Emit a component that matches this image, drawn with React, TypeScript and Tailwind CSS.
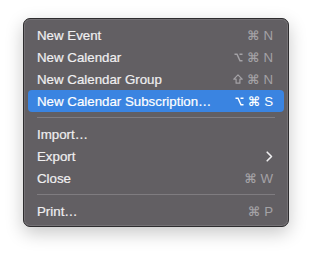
import React from "react";

type Item =
  | { kind: "item"; label: string; keys?: string[]; active?: boolean; submenu?: boolean }
  | { kind: "sep" };

const items: Item[] = [
  { kind: "item", label: "New Event", keys: ["cmd", "N"] },
  { kind: "item", label: "New Calendar", keys: ["opt", "cmd", "N"] },
  { kind: "item", label: "New Calendar Group", keys: ["shift", "cmd", "N"] },
  { kind: "item", label: "New Calendar Subscription…", keys: ["opt", "cmd", "S"], active: true },
  { kind: "sep" },
  { kind: "item", label: "Import…" },
  { kind: "item", label: "Export", submenu: true },
  { kind: "item", label: "Close", keys: ["cmd", "W"] },
  { kind: "sep" },
  { kind: "item", label: "Print…", keys: ["cmd", "P"] },
];

function KeyGlyph({ k, color }: { k: string; color: string }) {
  if (k === "opt") {
    return (
      <svg width="9" height="9" viewBox="0 0 9 9" className="block">
        <path d="M0.5 1.2 H3 L6 7.8 H8.5 M5.5 1.2 H8.5" fill="none" stroke={color} strokeWidth="1.4" />
      </svg>
    );
  }
  if (k === "shift") {
    return (
      <svg width="10" height="10" viewBox="0 0 10 10" className="block">
        <path d="M5 0.9 L9.2 5.2 H6.9 V9.2 H3.1 V5.2 H0.8 Z" fill="none" stroke={color} strokeWidth="1.2" strokeLinejoin="round" />
      </svg>
    );
  }
  if (k === "cmd") {
    return (
      <span className="font-['DejaVu_Sans',sans-serif] font-bold text-[13px] leading-none">⌘</span>
    );
  }
  return <span className="font-['Liberation_Sans',sans-serif] text-[13.3px] leading-none">{k}</span>;
}

function Keys({ keys, active }: { keys: string[]; active?: boolean }) {
  const color = active ? "#ffffff" : "#a4a2a6";
  return (
    <div className="flex items-center gap-[4px] pt-[1px]" style={{ color }}>
      {keys.map((k, i) => (
        <KeyGlyph key={i} k={k} color={color} />
      ))}
    </div>
  );
}

export default function App() {
  return (
    <div className="w-[312px] h-[254px] bg-white pt-[18px] pl-[23px]">
      <div className="w-[266px] rounded-[7px] bg-[#625f63] border border-[#2e2d2f] shadow-[0_6px_18px_rgba(0,0,0,0.22),inset_0_0_0_1px_rgba(255,255,255,0.12)] px-[4px] pt-[5px] pb-[4px] font-['Liberation_Sans',sans-serif]">
        {items.map((it, i) =>
          it.kind === "sep" ? (
            <div key={i} className="h-[11px] flex items-center px-[9px]">
              <div className="h-px w-full bg-[#7f7c80]" />
            </div>
          ) : (
            <div
              key={i}
              className={`h-[22px] flex items-center justify-between pl-[9px] pr-[11px] rounded-[4px] ${
                it.active ? "bg-[#3a84e1] text-white" : "text-[#f0eff1]"
              }`}
            >
              <span className="text-[13.3px] leading-none pt-[1px] [-webkit-text-stroke:0.2px_currentColor]">{it.label}</span>
              {it.keys && <Keys keys={it.keys} active={it.active} />}
              {it.submenu && (
                <svg width="7" height="11" viewBox="0 0 7 11" className="block">
                  <path d="M1.2 1.2 L5.5 5.5 L1.2 9.8" fill="none" stroke="#f0eff1" strokeWidth="1.6" strokeLinecap="round" strokeLinejoin="round" />
                </svg>
              )}
            </div>
          )
        )}
      </div>
    </div>
  );
}
